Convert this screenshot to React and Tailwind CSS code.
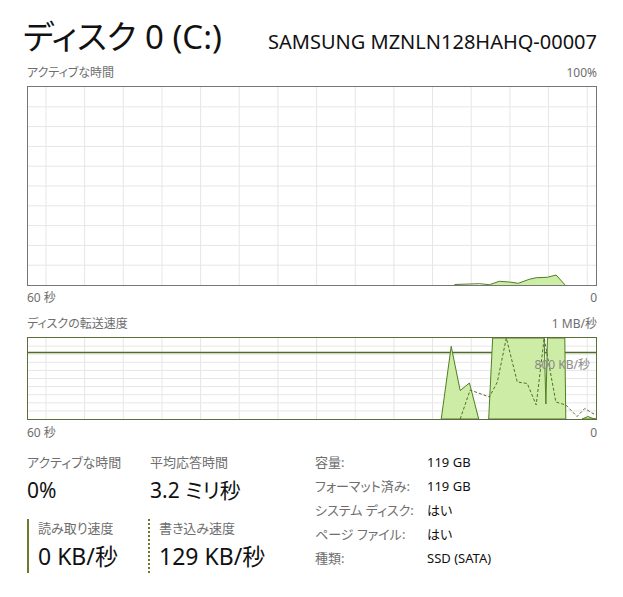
import React from 'react';

const font = { fontFamily: '"Noto Sans", "Noto Sans CJK JP", sans-serif', fontFeatureSettings: '"palt"' };

const vLines = Array.from({ length: 15 }, (_, i) => 18 + i * 38.8);

const Grid = ({ h, rows }) => (
  <g stroke="#e6e6e6" strokeWidth="1">
    {vLines.map((x) => (
      <line key={`v${x}`} x1={x} y1="0" x2={x} y2={h} />
    ))}
    {Array.from({ length: rows - 1 }, (_, i) => (h / rows) * (i + 1)).map((y) => (
      <line key={`h${y}`} x1="0" y1={y} x2="570" y2={y} />
    ))}
  </g>
);

const LabelRow = ({ left, right, className = '' }) => (
  <div className={`flex justify-between text-[12px] leading-[16px] text-[#6e6e6e] ${className}`}>
    <span>{left}</span>
    <span>{right}</span>
  </div>
);

const ActiveChart = () => (
  <div className="h-[200px] border border-[#767676]">
    <svg width="100%" height="100%" viewBox="0 0 570 198" preserveAspectRatio="none">
      <Grid h={198} rows={10} />
      <polygon
        points="463,198 473,194.3 483,195 492,196.3 503,192.3 510,190.7 521,190.3 530,188 539,198"
        fill="#cdeca6"
      />
      <polyline
        points="428,197.5 453,196.7 463,197.7 473,194.3 483,195 492,196.3 503,192.3 510,190.7 521,190.3 530,188 539,198"
        fill="none"
        stroke="#4f7d22"
        strokeWidth="1"
      />
    </svg>
  </div>
);

const TransferChart = () => (
  <div className="relative h-[83px] border border-[#5b6e3a]">
    <svg width="100%" height="100%" viewBox="0 0 570 81" preserveAspectRatio="none">
      <Grid h={81} rows={10} />
      <line x1="0" y1="14.5" x2="570" y2="14.5" stroke="#4f6e24" strokeWidth="1.3" />
      <polygon
        points="414.7,81 424.7,8.3 433.7,52.5 443,45 452.3,81"
        fill="#cdeca6"
        stroke="#4f7d22"
        strokeWidth="1"
      />
      <polygon
        points="462.3,81 466.3,0 518,0 519.7,66 521.3,0 538.7,0 539.7,81"
        fill="#cdeca6"
        stroke="#4f7d22"
        strokeWidth="1"
      />
      <polygon points="556,81 562,78.5 567,80.5 570,81" fill="#cdeca6" stroke="#4f7d22" strokeWidth="1" />
      <polyline
        points="433.7,81 443.7,52 463,59 471,44 480,0 491,44 501,45.5 510,67 518,0 529.7,64 539.7,67 551,78.5 558.7,70.5 567,75.5 570,77"
        fill="none"
        stroke="#4f6e24"
        strokeWidth="1"
        strokeDasharray="3 2"
      />
    </svg>
    <span className="absolute right-[6px] top-[19px] text-[12px] leading-[16px] text-[#8a8a8a]">800 KB/秒</span>
  </div>
);

const Stat = ({ label, value, big = false, className = '' }) => (
  <div className={className}>
    <div className="text-[13px] leading-[18px] text-[#6e6e6e]">{label}</div>
    <div className={`mt-[6px] leading-[26px] text-[#111] ${big ? 'text-[23px]' : 'text-[21px]'}`}>{value}</div>
  </div>
);

const info = [
  ['容量:', '119 GB'],
  ['フォーマット済み:', '119 GB'],
  ['システム ディスク:', 'はい'],
  ['ページ ファイル:', 'はい'],
  ['種類:', 'SSD (SATA)'],
];

export default function App() {
  return (
    <div className="h-[597px] w-[623px] bg-white pl-[27px] pr-[26px] pt-[16px]" style={font}>
      <div className="flex items-end justify-between">
        <h1 className="-ml-[4px] text-[33px] leading-[42px] text-[#111]">ディスク 0 (C:)</h1>
        <span className="mb-[3px] text-[20px] leading-[26px] text-[#111]">SAMSUNG MZNLN128HAHQ-00007</span>
      </div>
      <LabelRow left="アクティブな時間" right="100%" className="mt-[7px] mb-[5px]" />
      <ActiveChart />
      <LabelRow left="60 秒" right="0" className="mt-[4px]" />
      <LabelRow left="ディスクの転送速度" right="1 MB/秒" className="mt-[10px] mb-[5px]" />
      <TransferChart />
      <LabelRow left="60 秒" right="0" className="mt-[5px]" />

      <div className="mt-[12px] flex">
        <div className="w-[288px]">
          <div className="flex">
            <Stat label="アクティブな時間" value="0%" className="w-[123px]" />
            <Stat label="平均応答時間" value="3.2 ミリ秒" />
          </div>
          <div className="mt-[16px] flex">
            <div className="w-[121px] border-l-2 border-[#6b7a2c] pl-[9px] pb-[4px]">
              <Stat label="読み取り速度" value="0 KB/秒" big />
            </div>
            <div className="border-l-2 border-dotted border-[#6b7a2c] pl-[9px] pb-[4px]">
              <Stat label="書き込み速度" value="129 KB/秒" big />
            </div>
          </div>
        </div>
        <div className="-mt-[3px] flex flex-col text-[13px] leading-[24px]">
          {info.map(([k, v]) => (
            <div key={k} className="flex">
              <span className="w-[112px] text-[#6e6e6e]">{k}</span>
              <span className="text-[#111]">{v}</span>
            </div>
          ))}
        </div>
      </div>
    </div>
  );
}
